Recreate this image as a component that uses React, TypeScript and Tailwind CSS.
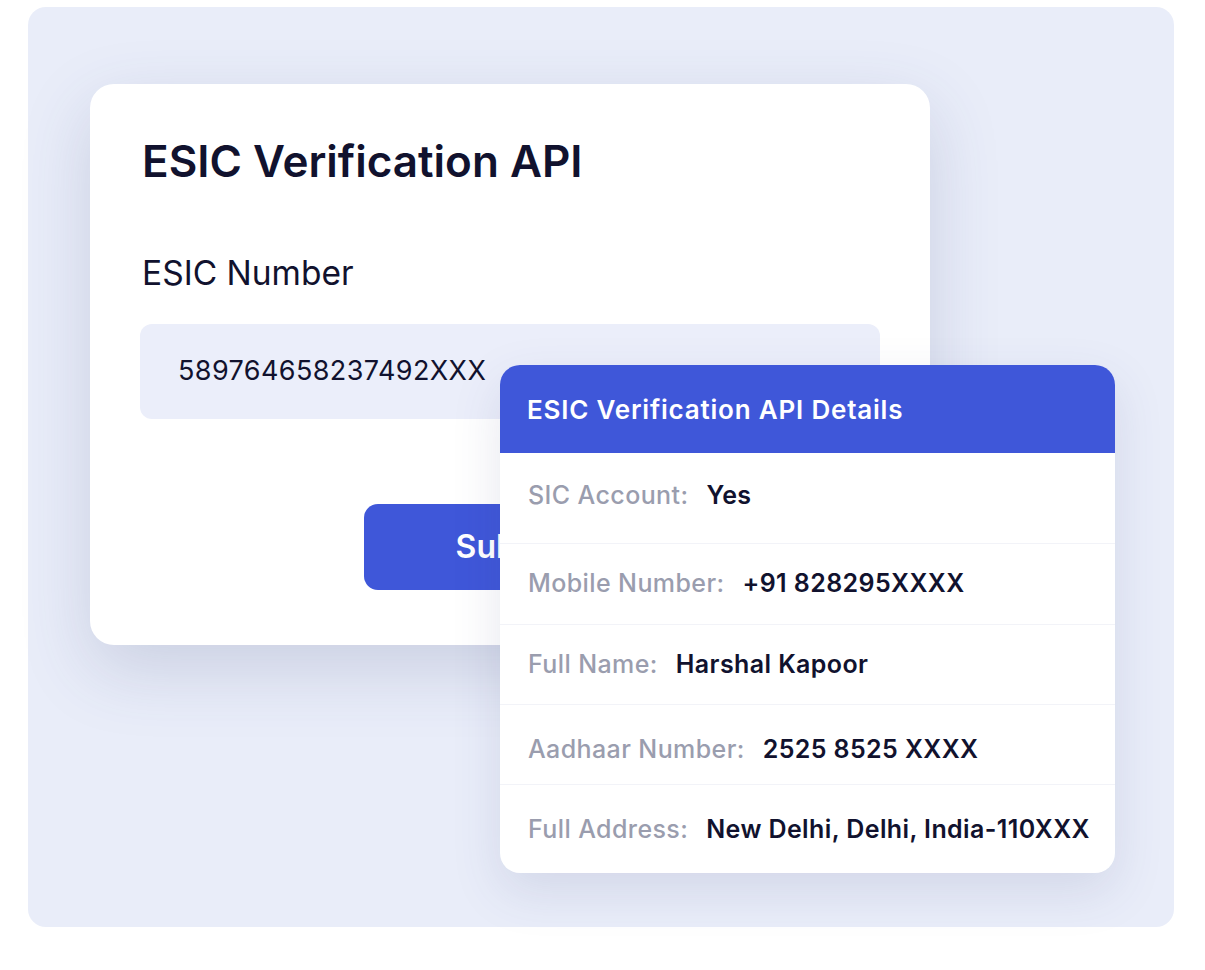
const rows = [
  { label: "SIC Account:", value: "Yes", h: "h-[91px]", pt: "pt-[27px]", border: true },
  { label: "Mobile Number:", value: "+91 828295XXXX", h: "h-[81px]", pt: "pt-[24px]", border: true },
  { label: "Full Name:", value: "Harshal Kapoor", h: "h-[80px]", pt: "pt-[24px]", border: true },
  { label: "Aadhaar Number:", value: "2525 8525 XXXX", h: "h-[80px]", pt: "pt-[29px]", border: true },
  { label: "Full Address:", value: "New Delhi, Delhi, India-110XXX", h: "h-[88px]", pt: "pt-[29px]", border: false },
];

export default function App() {
  return (
    <main
      className="min-h-screen w-[1205px] h-[970px] bg-white pt-[7px] pl-[28px]"
      style={{ fontFamily: "Inter, 'Noto Sans', sans-serif" }}
    >
      <div className="relative h-[920px] w-[1146px] rounded-[18px] bg-[#E9EDF9] pt-[77px] pl-[62px]">
        {/* form card */}
        <div className="h-[561px] w-[840px] rounded-[24px] bg-white pt-[51px] pl-[52px] pr-[50px] shadow-[0_24px_70px_rgba(60,70,120,0.18)]">
          <h1 className="text-[44px] font-semibold leading-[52px] text-[#11122E]">
            ESIC Verification API
          </h1>
          <div className="mt-[66px] text-[33.5px] leading-[40px] text-[#11122E]">ESIC Number</div>
          <div className="mt-[31px] flex h-[95px] w-[740px] -ml-[2px] items-center rounded-[12px] bg-[#EBEEFA] pl-[38px]">
            <span className="text-[27px] tracking-[0.4px] text-[#11122E]">589764658237492XXX</span>
          </div>
          <div className="mt-[85px] flex justify-center pr-[2px]">
            <button className="flex h-[86px] w-[292px] items-center justify-center rounded-[14px] bg-[#3F57D9] text-[32px] font-semibold text-white">
              Submit
            </button>
          </div>
        </div>

        {/* details card */}
        <div className="absolute left-[472px] top-[358px] w-[615px] overflow-hidden rounded-[20px] bg-white shadow-[0_18px_50px_rgba(60,70,120,0.13)]">
          <div className="flex h-[88px] items-center bg-[#3F57D9] pl-[27px]">
            <span className="text-[26px] font-semibold tracking-[0.8px] text-white">ESIC Verification API Details</span>
          </div>
          {rows.map((r) => (
            <div
              key={r.label}
              className={`${r.h} ${r.pt} flex pl-[28px] ${r.border ? "border-b border-[#F2F3F8]" : ""}`}
            >
              <div className="flex h-[30px] items-center gap-[18px] text-[25px] leading-[30px] tracking-[0.4px]">
                <span className="font-medium text-[#9A9DAE]">{r.label}</span>
                <span className="font-semibold text-[#11122E]">{r.value}</span>
              </div>
            </div>
          ))}
        </div>
      </div>
    </main>
  );
}
